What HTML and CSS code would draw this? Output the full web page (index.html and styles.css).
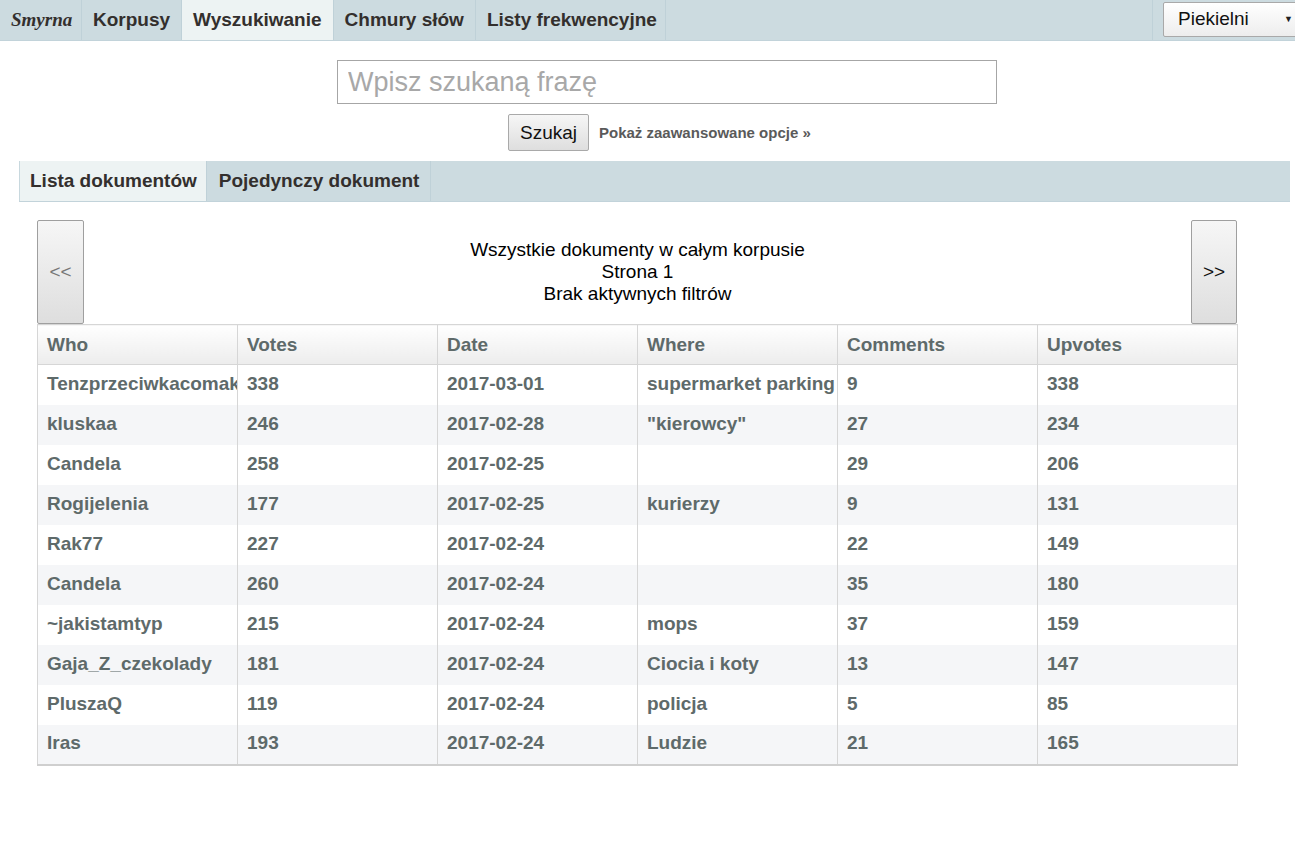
FILE: index.html
```html
<!DOCTYPE html>
<html lang="pl">
<head>
<meta charset="utf-8">
<title>Smyrna</title>
<link rel="stylesheet" href="styles.css">
</head>
<body>
<nav class="topnav">
  <a class="nav-item brand">Smyrna</a>
  <a class="nav-item">Korpusy</a>
  <a class="nav-item active">Wyszukiwanie</a>
  <a class="nav-item">Chmury słów</a>
  <a class="nav-item narrow">Listy frekwencyjne</a>
  <div class="nav-spacer"></div>
  <div class="nav-select-wrap">
    <div class="fake-select"><span>Piekielni</span><span class="caret">▼</span></div>
  </div>
</nav>

<section class="search">
  <input class="search-input" type="text" placeholder="Wpisz szukaną frazę">
  <div class="search-actions">
    <button class="btn btn-search">Szukaj</button>
    <a class="adv-link">Pokaż zaawansowane opcje »</a>
  </div>
</section>

<div class="subtabs">
  <a class="subtab active">Lista dokumentów</a>
  <a class="subtab">Pojedynczy dokument</a>
</div>

<div class="results">
  <div class="pager">
    <button class="btn pager-btn disabled">&lt;&lt;</button>
    <div class="pager-info">
      <div>Wszystkie dokumenty w całym korpusie</div>
      <div>Strona 1</div>
      <div>Brak aktywnych filtrów</div>
    </div>
    <button class="btn pager-btn">&gt;&gt;</button>
  </div>

  <table class="doc-table">
    <colgroup><col><col><col><col><col><col></colgroup>
    <thead>
      <tr><th>Who</th><th>Votes</th><th>Date</th><th>Where</th><th>Comments</th><th>Upvotes</th></tr>
    </thead>
    <tbody>
      <tr><td>Tenzprzeciwkacomakota</td><td>338</td><td>2017-03-01</td><td>supermarket parking</td><td>9</td><td>338</td></tr>
      <tr><td>kluskaa</td><td>246</td><td>2017-02-28</td><td>"kierowcy"</td><td>27</td><td>234</td></tr>
      <tr><td>Candela</td><td>258</td><td>2017-02-25</td><td></td><td>29</td><td>206</td></tr>
      <tr><td>Rogijelenia</td><td>177</td><td>2017-02-25</td><td>kurierzy</td><td>9</td><td>131</td></tr>
      <tr><td>Rak77</td><td>227</td><td>2017-02-24</td><td></td><td>22</td><td>149</td></tr>
      <tr><td>Candela</td><td>260</td><td>2017-02-24</td><td></td><td>35</td><td>180</td></tr>
      <tr><td>~jakistamtyp</td><td>215</td><td>2017-02-24</td><td>mops</td><td>37</td><td>159</td></tr>
      <tr><td>Gaja_Z_czekolady</td><td>181</td><td>2017-02-24</td><td>Ciocia i koty</td><td>13</td><td>147</td></tr>
      <tr><td>PluszaQ</td><td>119</td><td>2017-02-24</td><td>policja</td><td>5</td><td>85</td></tr>
      <tr><td>Iras</td><td>193</td><td>2017-02-24</td><td>Ludzie</td><td>21</td><td>165</td></tr>
    </tbody>
  </table>
</div>
</body>
</html>
```

FILE: styles.css
```css
* { box-sizing: border-box; }

body {
  margin: 0;
  font-family: "Liberation Sans", Arial, sans-serif;
  font-size: 19px;
  color: #000;
  background: #fff;
}

/* top navigation */
.topnav {
  display: flex;
  align-items: stretch;
  height: 41px;
  background: #ccdbe0;
  border-bottom: 1px solid #c2d3da;
  overflow: hidden;
}
.nav-item {
  display: flex;
  align-items: center;
  padding: 0 11px;
  border-right: 1px solid #bfd1d8;
  font-weight: bold;
  font-size: 19px;
  color: #332f2d;
  cursor: pointer;
  flex-shrink: 0;
}
.nav-item.active { background: #edf3f3; }
.nav-item.narrow { padding: 0 8px 0 11px; }
.brand {
  font-family: "Liberation Serif", "Times New Roman", serif;
  font-style: italic;
  padding: 0 10px 0 11px;
  width: 82px;
}
.nav-spacer {
  flex: 1;
  border-right: 1px solid #bfd1d8;
}
.nav-select-wrap {
  display: flex;
  align-items: center;
  padding-left: 10px;
  flex-shrink: 0;
}
.fake-select {
  display: flex;
  align-items: center;
  justify-content: space-between;
  width: 140px;
  height: 35px;
  margin: -2px -8px 0 0;
  padding: 0 0 0 14px;
  border: 1px solid #a9a9a9;
  border-radius: 2px;
  background: linear-gradient(#ffffff, #ededed);
  font-size: 19px;
  color: #111;
}
.caret {
  font-size: 9px;
  margin-right: 9px;
  color: #222;
}

/* search */
.search {
  margin: 19px 0 0 337px;
  width: 660px;
}
.search-input {
  display: block;
  width: 660px;
  height: 44px;
  padding: 0 10px;
  border: 1px solid #a6a6a6;
  font-family: "Liberation Sans", Arial, sans-serif;
  font-size: 27px;
  color: #333;
  outline: none;
}
.search-input::placeholder { color: #a8a8a8; }
.search-actions {
  display: flex;
  align-items: center;
  gap: 10px;
  margin: 10px 0 0 171px;
}
.btn {
  font-family: "Liberation Sans", Arial, sans-serif;
  font-size: 19px;
  color: #111;
  background: linear-gradient(#f6f6f6, #dedede);
  border: 1px solid #a9a9a9;
  border-radius: 2px;
  cursor: pointer;
}
.btn-search {
  width: 81px;
  height: 37px;
  padding: 0;
}
.adv-link {
  font-size: 15px;
  font-weight: bold;
  color: #5a5a5a;
  cursor: pointer;
}

/* sub tabs */
.subtabs {
  display: flex;
  height: 41px;
  margin: 10px 5px 0 19px;
  background: #ccdbe0;
  border-bottom: 1px solid #c2d3da;
}
.subtab {
  display: flex;
  align-items: center;
  padding: 0 11px 0 12px;
  border-right: 1px solid #bfd1d8;
  font-weight: bold;
  font-size: 19px;
  color: #332f2d;
  cursor: pointer;
}
.subtab.active {
  background: #edf3f3;
  border-left: 1px solid #c8d8de;
  padding: 0 9px 0 10px;
}

/* results */
.results {
  width: 1200px;
  margin: 18px 0 0 37px;
}
.pager {
  display: flex;
  align-items: stretch;
  height: 104px;
}
.pager-btn {
  width: 47px;
  padding: 0;
  border-color: #9f9f9f;
}
.pager-btn:last-child { width: 46px; }
.pager-btn.disabled { color: #777; }
.pager-info {
  flex: 1;
  display: flex;
  flex-direction: column;
  justify-content: center;
  align-items: center;
  line-height: 22px;
  font-size: 19px;
  color: #000;
}

.doc-table {
  width: 1200px;
  table-layout: fixed;
  border-collapse: collapse;
  border-bottom: 2px solid #cfcfcf;
  color: #5e6a6a;
  font-size: 19px;
  font-weight: bold;
}
.doc-table col { width: 200px; }
.doc-table th,
.doc-table td {
  height: 40px;
  padding: 0 9px;
  text-align: left;
  white-space: nowrap;
  overflow: hidden;
  border-left: 1px solid #d6d6d6;
  border-right: 1px solid #d6d6d6;
}
.doc-table td { padding-bottom: 2px; }
.doc-table th {
  border-top: 1px solid #d6d6d6;
  border-bottom: 1px solid #d6d6d6;
  background: linear-gradient(#ffffff, #ececec);
  height: 40px;
}
.doc-table tbody tr:nth-child(even) td { background: #f5f6f8; }
```
